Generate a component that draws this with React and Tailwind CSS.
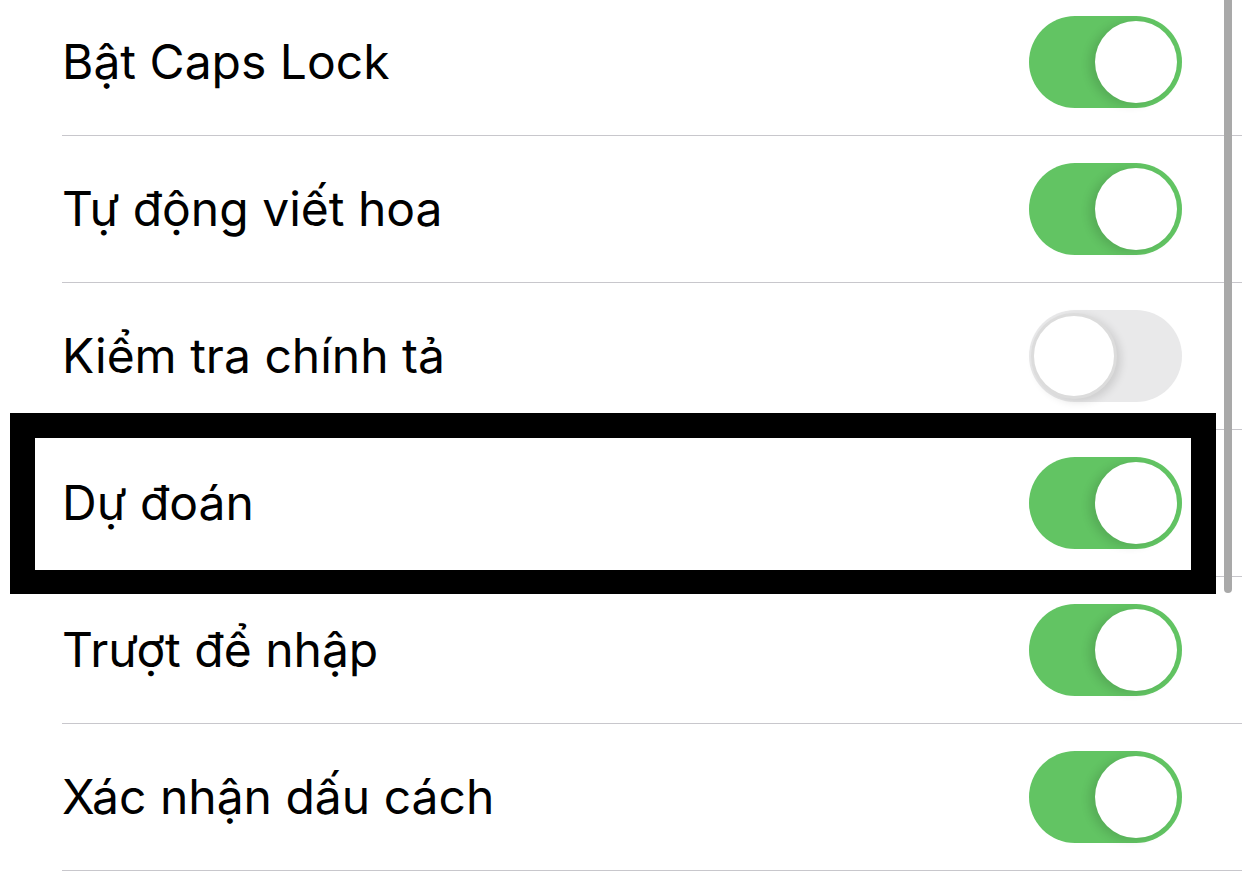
import React from "react";

const rows = [
  { label: "Bật Caps Lock", on: true },
  { label: "Tự động viết hoa", on: true },
  { label: "Kiểm tra chính tả", on: false },
  { label: "Dự đoán", on: true },
  { label: "Trượt để nhập", on: true },
  { label: "Xác nhận dấu cách", on: true },
];

const Toggle = ({ on }) => {
  if (on) {
    return (
      <div className="flex h-[92px] w-[153px] items-center justify-end rounded-full bg-[#62c463] pr-[5px]">
        <div className="h-[82px] w-[82px] rounded-full bg-white shadow-[-6px_2px_10px_rgba(0,0,0,0.12)]" />
      </div>
    );
  }
  return (
    <div className="flex h-[92px] w-[153px] items-center justify-start rounded-full bg-[#e9e9ea] pl-[2px]">
      <div className="h-[86px] w-[86px] rounded-full border-[3px] border-[#dcdcdc] bg-white shadow-[4px_3px_8px_rgba(0,0,0,0.12)]" />
    </div>
  );
};

const Row = ({ label, on }) => (
  <div className="flex h-[147px] items-center border-b border-[#c8c7cc] pr-[60px]">
    <span className="flex-1 text-[48px] leading-none text-black">{label}</span>
    <Toggle on={on} />
  </div>
);

export default function App() {
  return (
    <div
      className="relative h-[888px] w-[1242px] overflow-hidden bg-white"
      style={{ fontFamily: "Inter, 'Noto Sans', sans-serif" }}
    >
      <div className="-mt-[11px] ml-[62px]">
        {rows.map((r) => (
          <Row key={r.label} label={r.label} on={r.on} />
        ))}
      </div>

      {/* highlight box */}
      <div className="absolute left-[10px] top-[413px] h-[181px] w-[1206px] border-[25px] border-b-[24px] border-black" />

      {/* scrollbar */}
      <div className="absolute left-[1224px] top-0 h-[593px] w-[8px] rounded-b-full bg-[#a9a9a9]" />
    </div>
  );
}
